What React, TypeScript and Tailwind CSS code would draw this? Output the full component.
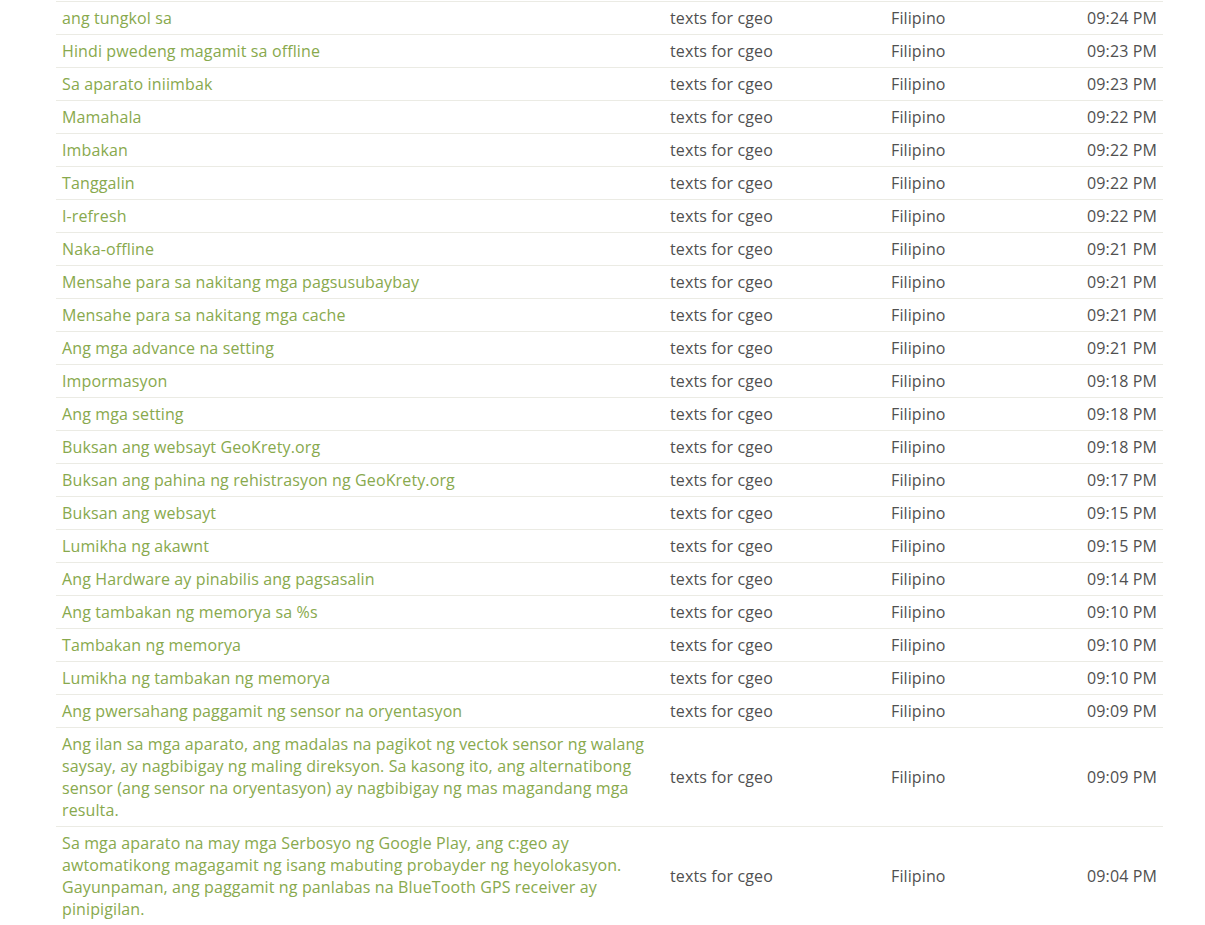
const rows: [string, string][] = [
  ["ang tungkol sa", "09:24 PM"],
  ["Hindi pwedeng magamit sa offline", "09:23 PM"],
  ["Sa aparato iniimbak", "09:23 PM"],
  ["Mamahala", "09:22 PM"],
  ["Imbakan", "09:22 PM"],
  ["Tanggalin", "09:22 PM"],
  ["I-refresh", "09:22 PM"],
  ["Naka-offline", "09:21 PM"],
  ["Mensahe para sa nakitang mga pagsusubaybay", "09:21 PM"],
  ["Mensahe para sa nakitang mga cache", "09:21 PM"],
  ["Ang mga advance na setting", "09:21 PM"],
  ["Impormasyon", "09:18 PM"],
  ["Ang mga setting", "09:18 PM"],
  ["Buksan ang websayt GeoKrety.org", "09:18 PM"],
  ["Buksan ang pahina ng rehistrasyon ng GeoKrety.org", "09:17 PM"],
  ["Buksan ang websayt", "09:15 PM"],
  ["Lumikha ng akawnt", "09:15 PM"],
  ["Ang Hardware ay pinabilis ang pagsasalin", "09:14 PM"],
  ["Ang tambakan ng memorya sa %s", "09:10 PM"],
  ["Tambakan ng memorya", "09:10 PM"],
  ["Lumikha ng tambakan ng memorya", "09:10 PM"],
  ["Ang pwersahang paggamit ng sensor na oryentasyon", "09:09 PM"],
  [
    "Ang ilan sa mga aparato, ang madalas na pagikot ng vectok sensor ng walang saysay, ay nagbibigay ng maling direksyon. Sa kasong ito, ang alternatibong sensor (ang sensor na oryentasyon) ay nagbibigay ng mas magandang mga resulta.",
    "09:09 PM",
  ],
  [
    "Sa mga aparato na may mga Serbosyo ng Google Play, ang c:geo ay awtomatikong magagamit ng isang mabuting probayder ng heyolokasyon. Gayunpaman, ang paggamit ng panlabas na BlueTooth GPS receiver ay pinipigilan.",
    "09:04 PM",
  ],
]

export default function App() {
  return <div className="min-h-screen bg-white pt-px font-['Open_Sans',sans-serif] text-[16px] leading-[22px] tracking-[0.12px]">
    <div className="ml-[56px] w-[1107px]">
      <table className="w-full border-collapse table-fixed">
        <colgroup>
          <col className="w-[608px]" />
          <col className="w-[221px]" />
          <col className="w-[160px]" />
          <col />
        </colgroup>
        <tbody>
          {rows.map(([text, time], i) => (
            <tr key={i} className="border-t border-[#ebebe4]">
              <td className="px-[6px] py-[5px] align-middle text-[#88a94d]">
                <span className="block pr-[4px]">{text}</span>
              </td>
              <td className="px-[6px] py-[5px] align-middle text-[#505050]">texts for cgeo</td>
              <td className="px-[6px] py-[5px] align-middle text-[#505050]">Filipino</td>
              <td className="px-[6px] py-[5px] align-middle text-right text-[#505050]">{time}</td>
            </tr>
          ))}
        </tbody>
      </table>
    </div>
  </div>
}
